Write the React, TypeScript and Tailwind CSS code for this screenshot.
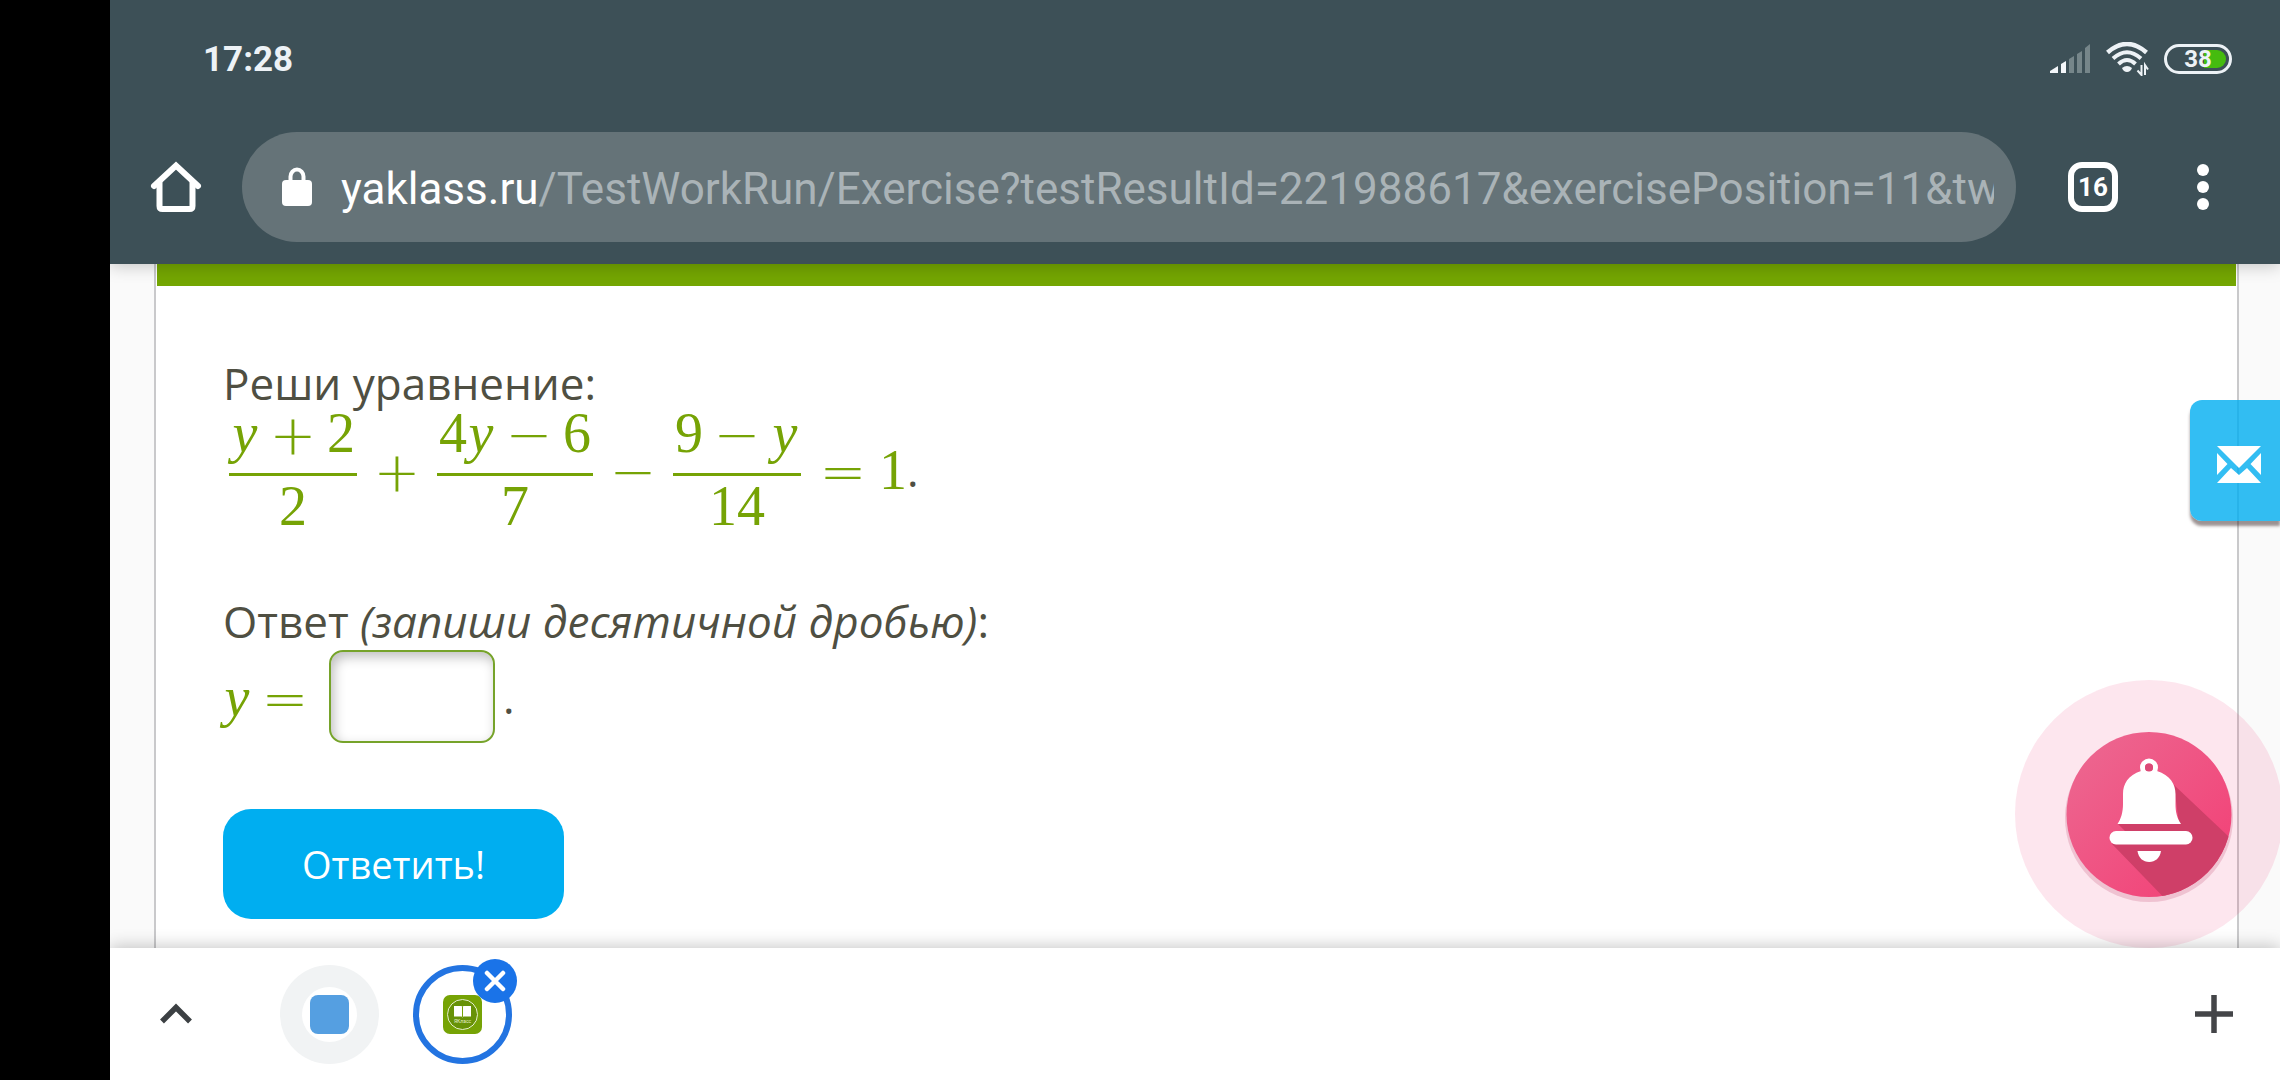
import { useState, type ReactNode } from "react";

function Op({ children, className = "" }: { children: ReactNode; className?: string }) {
  return (
    <span className={`flex w-11 justify-center pt-1 font-['DejaVu_Sans',sans-serif] font-extralight ${className}`}>
      {children}
    </span>
  );
}

function Digit({ children }: { children: ReactNode }) {
  return <span className="w-7 text-center">{children}</span>;
}

function Y() {
  return <span className="w-7 text-center italic">y</span>;
}

function Fraction({ top, bottom }: { top: ReactNode; bottom: ReactNode }) {
  return (
    <span className="flex flex-col items-center">
      <span className="flex h-14 items-center px-0.5">{top}</span>
      <span className="mt-3 h-[3px] w-full bg-[#76a305]" />
      <span className="mt-0.5 flex h-14 items-center">{bottom}</span>
    </span>
  );
}

function StatusBar() {
  return (
    <div className="flex h-[118px] items-center justify-between pr-12 pl-[93px] text-[#edf2f6]">
      <span className="text-[35px] leading-none font-bold">17:28</span>
      <div className="flex items-center">
        <svg width="40" height="30" viewBox="0 0 40 30" aria-label="Signal">
          <path d="M0 29V27L8 22V29z" fill="#f4f7fa" />
          <path d="M11 29V20L16 17V29z" fill="#f4f7fa" />
          <path d="M19 29V15L24 12V29zM27 29V10L32 7V29zM35 29V4L40 0V29z" fill="#76868a" />
        </svg>
        <svg className="ml-4" width="44" height="34" viewBox="0 0 44 34" fill="none" stroke="#edf2f6" aria-label="Wi-Fi">
          <path d="M1.500 10.500Q21 -6.500 40.500 10.500" strokeWidth="4.500" />
          <path d="M7 16.500Q21 4 35 16.500" strokeWidth="4" />
          <path d="M12.500 22Q21 14 29.500 22" strokeWidth="4" />
          <path d="M16 26Q21 22 26 26Q24.500 30 21 30Q17.500 30 16 26z" fill="#edf2f6" stroke="none" />
          <path d="M35.500 23V33L31.500 28.500M39 33V23L42 27.500" strokeWidth="2" />
        </svg>
        <div className="relative ml-3.5 flex h-[30px] w-[68px] items-center justify-center rounded-full border-[3px] border-[#edf2f6]">
          <span className="absolute top-[3px] right-[3px] h-[18px] w-[22px] rounded-r-full bg-[#45bb0f]" />
          <span className="relative text-2xl leading-none font-bold">38</span>
        </div>
      </div>
    </div>
  );
}

function Toolbar() {
  return (
    <div className="flex items-center pt-3.5 pr-[71px] pb-[22px] pl-10">
      <button aria-label="Home">
        <svg width="52" height="52" viewBox="0 0 52 52" fill="none" stroke="#fff" strokeWidth="6" strokeLinejoin="round" strokeLinecap="round">
          <path d="M4 25L26 4.500L48 25" strokeLinejoin="miter" />
          <path d="M9.500 22V45Q9.500 48 12.500 48H39.500Q42.500 48 42.500 45V22" />
        </svg>
      </button>
      <a
        href="#address"
        className="ml-10 flex h-[110px] min-w-0 flex-1 items-center rounded-full bg-[#657378] pr-[22px] pl-10"
      >
        <svg className="shrink-0" width="30" height="40" viewBox="0 0 30 40" aria-label="Secure">
          <path d="M8.500 16V9.500a6.500 7 0 0 1 13 0V16" fill="none" stroke="#fff" strokeWidth="4" />
          <rect y="13" width="30" height="26" rx="4" fill="#fff" />
        </svg>
        <span className="ml-[29px] overflow-hidden pt-1 text-[44px] leading-[60px] whitespace-nowrap text-[#aab3b7]">
          <span className="text-white">yaklass.ru</span>
          /TestWorkRun/Exercise?testResultId=221988617&amp;exercisePosition=11&amp;tw
        </span>
      </a>
      <button
        aria-label="Open tabs"
        className="ml-[52px] flex size-[50px] items-center justify-center rounded-[14px] border-[6px] border-white text-[26px] leading-none font-bold text-white"
      >
        16
      </button>
      <button aria-label="Menu" className="ml-[79px] flex flex-col gap-[5px]">
        <span className="size-3 rounded-full bg-white" />
        <span className="size-3 rounded-full bg-white" />
        <span className="size-3 rounded-full bg-white" />
      </button>
    </div>
  );
}

function Exercise() {
  const [answer, setAnswer] = useState("");

  return (
    <form
      onSubmit={e => e.preventDefault()}
      className="px-[67px] pt-[75px] font-['Open_Sans','Noto_Sans',sans-serif] text-[44px] leading-[44px] text-[#4f4f42]"
    >
      <p>Реши уравнение:</p>
      <div className="flex items-center pl-1.5">
        <div className="flex items-center font-['Liberation_Serif',serif] text-[56px] leading-[56px] text-[#76a305]">
          <Fraction top={<><Y /><Op className="mx-3">+</Op><Digit>2</Digit></>} bottom={<Digit>2</Digit>} />
          <Op className="mx-[18px]">+</Op>
          <Fraction
            top={<><Digit>4</Digit><Y /><Op className="mx-3">−</Op><Digit>6</Digit></>}
            bottom={<Digit>7</Digit>}
          />
          <Op className="mx-[18px]">−</Op>
          <Fraction
            top={<><Digit>9</Digit><Op className="mx-3">−</Op><Y /></>}
            bottom={<><Digit>1</Digit><Digit>4</Digit></>}
          />
          <Op className="mr-3.5 ml-5">=</Op>
          <Digit>1</Digit>
        </div>
        <span>.</span>
      </div>

      <p className="mt-[65px]">
        Ответ <em>(запиши десятичной дробью)</em>:
      </p>
      <div className="mt-[7px] flex items-center">
        <label
          htmlFor="answer"
          className="flex items-center font-['Liberation_Serif',serif] text-[56px] leading-[56px] text-[#76a305]"
        >
          <Y />
          <Op className="ml-3">=</Op>
        </label>
        <input
          id="answer"
          value={answer}
          onChange={e => setAnswer(e.target.value)}
          className="ml-[22px] h-[93px] w-[166px] rounded-[14px] border-2 border-[#76a32a] bg-white px-4 shadow-[inset_3px_5px_12px_rgba(0,0,0,0.25)] outline-none"
        />
        <span className="ml-2">.</span>
      </div>

      <button className="mt-[66px] h-[110px] rounded-[28px] bg-[#00aef0] px-[79px] text-[38px] text-white">Ответить!</button>
    </form>
  );
}

function BellButton() {
  return (
    <button aria-label="Notifications" className="absolute -right-1 bottom-0 z-10">
      <svg width="270" height="268" viewBox="0 0 270 268">
        <defs>
          <linearGradient id="bell-fill" x1="0" y1="0" x2="1" y2="1">
            <stop offset="0" stopColor="#ec6a92" />
            <stop offset="1" stopColor="#f33d74" />
          </linearGradient>
          <clipPath id="bell-clip">
            <circle cx="135" cy="134.500" r="82.500" />
          </clipPath>
        </defs>
        <circle cx="135" cy="134" r="134" fill="#e91e63" fillOpacity=".11" />
        <circle cx="135" cy="138" r="84" fill="#d98ba5" fillOpacity=".4" />
        <circle cx="135" cy="134.500" r="82.500" fill="url(#bell-fill)" />
        <g clipPath="url(#bell-clip)" fill="#cf3f68">
          <path d="M160 105L230 171V230H162L98 164L113 153L104 144H165z" />
        </g>
        <circle cx="135" cy="87.500" r="6.500" fill="none" stroke="#fff" strokeWidth="5" />
        <path d="M127 91C114 95 109 104 109 114V124C109 132 107 139 103.500 144H167C163 138 161.500 132 161.500 124V114C161.500 104 156 95 143 91z" fill="#fff" />
        <circle cx="135" cy="87.500" r="4" fill="#dc4a77" />
        <rect x="95.500" y="151" width="83" height="13.500" rx="6.500" fill="#fff" />
        <path d="M123.500 171H147C146 178 141 182 135.300 182C129 182 124.500 178 123.500 171z" fill="#fff" />
      </svg>
    </button>
  );
}

function TabStrip() {
  return (
    <div className="relative z-20 flex h-[132px] shrink-0 items-center justify-between bg-white pr-[47px] pl-[49px] shadow-[0_-2px_16px_rgba(0,0,0,0.22)]">
      <div className="flex items-center">
        <button aria-label="Show tabs">
          <svg width="34" height="22" viewBox="0 0 34 22" fill="none" stroke="#3c4043" strokeWidth="5.500">
            <path d="M3 18.500L17 4.500L31 18.500" />
          </svg>
        </button>
        <button aria-label="First tab" className="ml-[87px] flex size-[99px] items-center justify-center rounded-full bg-[#f1f3f4]">
          <span className="flex size-[55px] items-center justify-center rounded-full bg-white">
            <span className="size-[39px] shrink-0 rounded-lg bg-[#559fe1]" />
          </span>
        </button>
        <button
          aria-label="Close current tab"
          className="relative ml-[34px] flex size-[99px] items-center justify-center rounded-full border-[6px] border-[#2374e1]"
        >
          <svg width="39" height="39" viewBox="0 0 39 39">
            <rect width="39" height="39" rx="7" fill="#76a305" />
            <circle cx="19.500" cy="19.500" r="15" fill="#679207" stroke="#e6efcf" />
            <path d="M11 11H18.500L19.500 12L20.500 11H28V21.500H20.500L19.500 22.500L18.500 21.500H11z" fill="#fff" />
            <path d="M19.500 12V22" stroke="#76a305" />
            <text x="19.500" y="28" fontSize="5" textAnchor="middle" fill="#e6efcf">ЯКласс</text>
          </svg>
          <span className="absolute -top-3 -right-[11px] flex size-11 items-center justify-center rounded-full bg-[#1a73e8]">
            <svg width="22" height="22" viewBox="0 0 22 22" stroke="#fff" strokeWidth="4.500" strokeLinecap="round">
              <path d="M3 3L19 19M19 3L3 19" />
            </svg>
          </span>
        </button>
      </div>
      <button aria-label="New tab">
        <svg width="38" height="38" viewBox="0 0 38 38" stroke="#444548" strokeWidth="5.500">
          <path d="M19 0V38M0 19H38" />
        </svg>
      </button>
    </div>
  );
}

export default function App() {
  return (
    <div className="flex h-screen bg-black pl-[110px] font-['Roboto',sans-serif]">
      <div className="flex min-w-0 flex-1 flex-col overflow-hidden">
        <header className="relative z-20 shrink-0 bg-[#3d5057] shadow-[0_2px_16px_rgba(0,0,0,0.22)]">
          <StatusBar />
          <Toolbar />
        </header>

        <main className="relative flex min-h-0 flex-1 flex-col bg-[#fafafa] pr-[41px] pl-11">
          <div className="flex-1 border-x-2 border-[#c9c9cb] bg-white">
            <div className="mx-px h-[22px] bg-[#74a602]" />
            <Exercise />
          </div>

          <button
            aria-label="Write to us"
            className="absolute top-[136px] right-0 flex h-[121px] w-[90px] items-center rounded-l-xl bg-[#00aef0]/80 pt-2 pl-[27px] shadow-[0_5px_3px_rgba(60,40,40,0.5)]"
          >
            <svg width="44" height="37" viewBox="0 0 44 37" fill="#fff">
              <path d="M0 0H44L22 22zM0 7L10.500 18L0 29zM44 7L33.500 18L44 29zM0 37L14 22L22 29L30 22L44 37z" />
            </svg>
          </button>
          <BellButton />
        </main>

        <TabStrip />
      </div>
    </div>
  );
}
